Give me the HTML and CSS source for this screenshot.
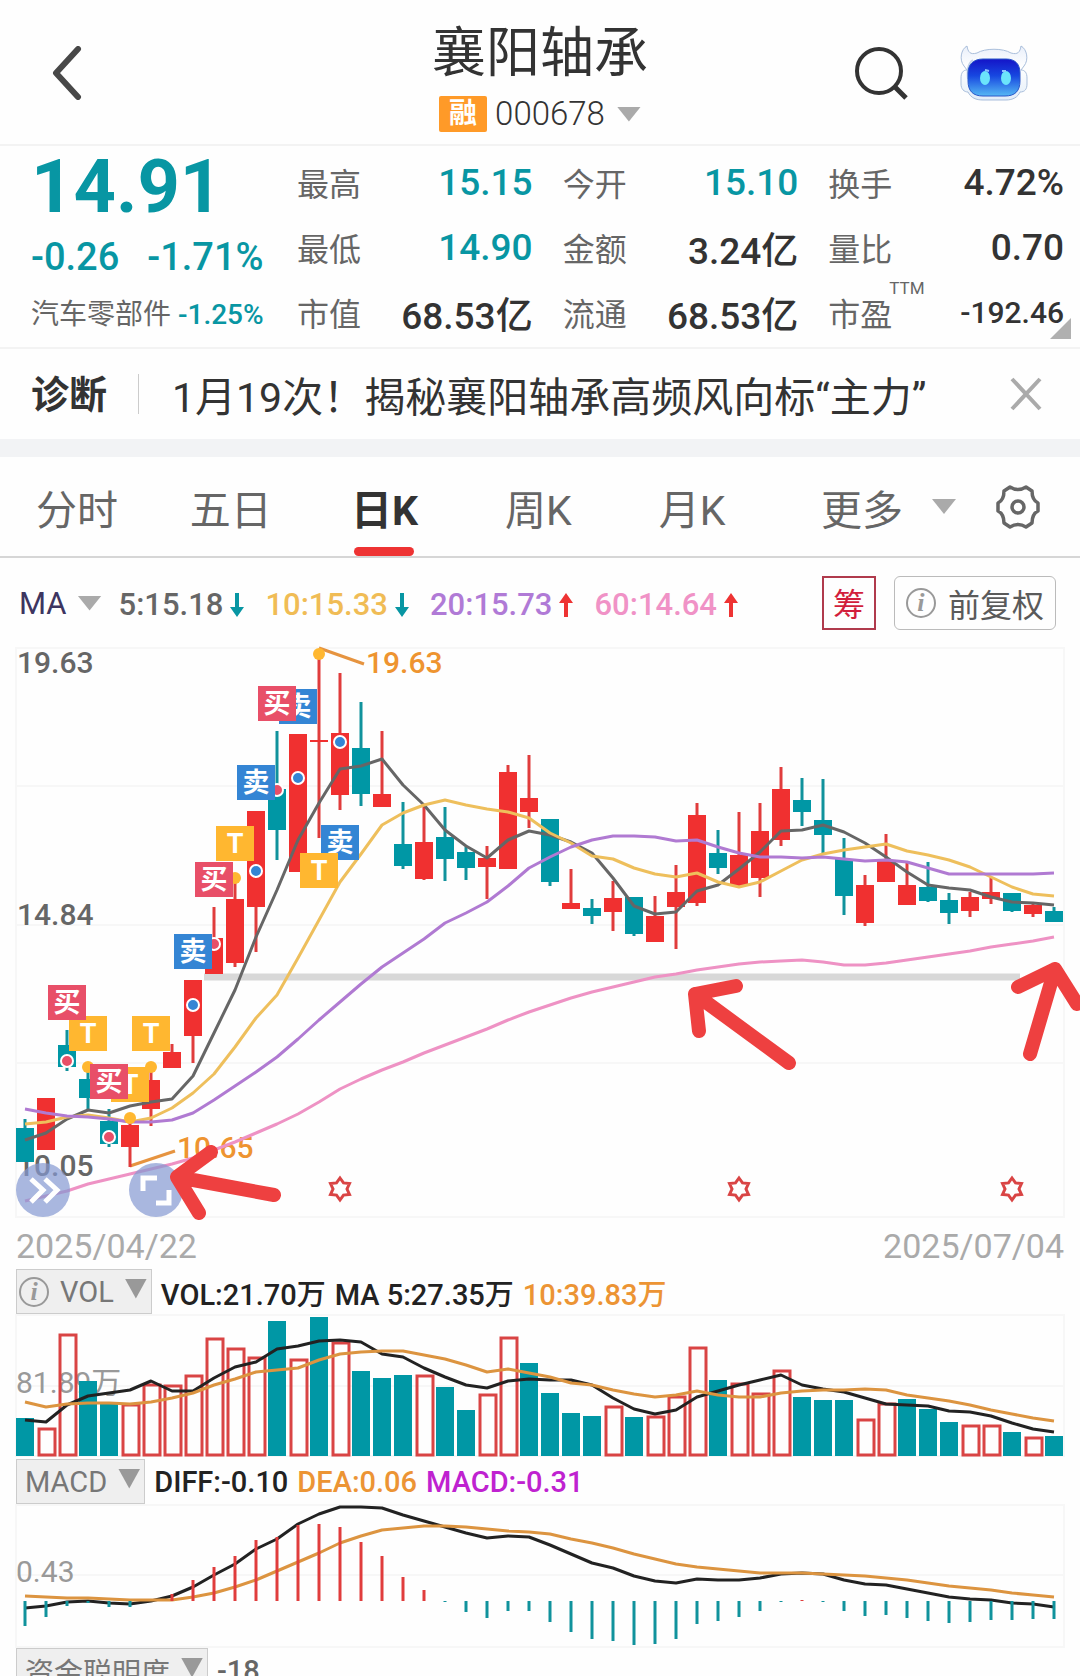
FILE: index.html
```html
<!DOCTYPE html>
<html lang="zh-CN">
<head>
<meta charset="utf-8">
<meta name="viewport" content="width=device-width, initial-scale=1">
<title>襄阳轴承 000678</title>
<link rel="stylesheet" href="styles.css">
</head>
<body>
<header class="topbar">
  <button class="icon-btn back" aria-label="返回">
    <svg width="30" height="54" viewBox="0 0 30 54"><path d="M26 3 4 27l22 24" fill="none" stroke="#484848" stroke-width="6" stroke-linecap="round" stroke-linejoin="round"/></svg>
  </button>
  <div class="title">
    <h1>襄阳轴承</h1>
    <button class="code"><span class="margin-tag">融</span>000678<i class="tri"></i></button>
  </div>
  <div class="actions">
    <button class="icon-btn" aria-label="搜索">
      <svg width="54" height="54" viewBox="0 0 54 54" fill="none" stroke="#333"><circle cx="25" cy="25" r="22" stroke-width="4"/><path d="m40 40 12 12" stroke-width="5"/></svg>
    </button>
    <button class="icon-btn" aria-label="智能助手">
      <svg width="68" height="56" viewBox="0 0 68 56">
        <defs>
          <linearGradient id="face" x1="0" y1="0" x2="0" y2="1"><stop offset="0" stop-color="#1414c8"/><stop offset=".45" stop-color="#1747e0"/><stop offset="1" stop-color="#55b8f4"/></linearGradient>
          <linearGradient id="shell" x1="0" y1="0" x2="0" y2="1"><stop offset="0" stop-color="#e9effa"/><stop offset=".4" stop-color="#fff"/><stop offset="1" stop-color="#e2edf9"/></linearGradient>
        </defs>
        <path d="M7 1C1 4-1 15 4 21l3 4c-4 0-6 3-6 8v6c0 5 3 8 7 8 3 6 8 8 15 8h23c7 0 12-3 14-8 5 0 7-3 7-8v-6c0-5-2-8-6-8l3-4c5-6 3-17-3-20-1 6-3 9-10 7-8-5-26-5-34 0-7 2-9-1-10-7Z" fill="url(#shell)" stroke="#a9bedb"/>
        <path d="M13 15c-5 3-6 11-5 19" fill="none" stroke="#c5d3ea" stroke-width="2"/>
        <path d="M23 14h23c10 0 14 6 14 14v8c0 10-5 15-15 15H23C13 51 8 46 8 36v-8c0-8 5-14 15-14Z" fill="url(#face)" stroke="#2a56c8"/>
        <ellipse cx="25" cy="33" rx="5" ry="7" fill="#6be4fb"/><ellipse cx="46" cy="33" rx="5" ry="7" fill="#6be4fb"/>
        <path d="m25 25 4 1M46 26l-4 0" stroke="#8ec5ff" stroke-width="2"/>
      </svg>
    </button>
  </div>
</header>

<section class="quote">
  <div class="price">
    <strong class="last">14.91</strong>
    <div class="change"><span>-0.26</span><span>-1.71%</span></div>
    <div class="sector">汽车零部件 <b>-1.25%</b></div>
  </div>
  <dl class="stats">
    <div><dt>最高</dt><dd class="down">15.15</dd></div>
    <div><dt>今开</dt><dd class="down">15.10</dd></div>
    <div><dt>换手</dt><dd>4.72%</dd></div>
    <div><dt>最低</dt><dd class="down">14.90</dd></div>
    <div><dt>金额</dt><dd>3.24亿</dd></div>
    <div><dt>量比</dt><dd>0.70</dd></div>
    <div><dt>市值</dt><dd>68.53亿</dd></div>
    <div><dt>流通</dt><dd>68.53亿</dd></div>
    <div><dt>市盈<sup>TTM</sup></dt><dd class="small">-192.46</dd></div>
  </dl>
</section>

<section class="diagnosis">
  <strong>诊断</strong>
  <a href="#">1月19次！揭秘襄阳轴承高频风向标“主力”</a>
  <button class="icon-btn" aria-label="关闭">
    <svg width="32" height="34" viewBox="0 0 32 34"><path d="m2 2 28 30M30 2 2 32" stroke="#aaa" stroke-width="4"/></svg>
  </button>
</section>

<nav class="tabs">
  <button>分时</button>
  <button>五日</button>
  <button class="active">日K</button>
  <button>周K</button>
  <button>月K</button>
  <button class="more">更多<i class="tri"></i></button>
  <button class="icon-btn" aria-label="设置">
    <svg width="44" height="44" viewBox="0 0 44 44" fill="none" stroke="#666" stroke-width="3.5" stroke-linejoin="round"><path d="M14 2q8 5 16 0l6 4q0 9 6 12v8q-6 3-6 12l-6 4q-8-5-16 0l-6-4q0-9-6-12v-8q6-3 6-12Z"/><circle cx="22" cy="22" r="6"/></svg>
  </button>
</nav>

<section class="ma-row">
  <button class="ma-select">MA<i class="tri"></i></button>
  <ul class="ma-list">
    <li class="ma5">5:15.18<svg class="dn" viewBox="0 0 14 24"><path d="M5 0h4v14h5l-7 10-7-10h5Z"/></svg></li>
    <li class="ma10">10:15.33<svg class="dn" viewBox="0 0 14 24"><path d="M5 0h4v14h5l-7 10-7-10h5Z"/></svg></li>
    <li class="ma20">20:15.73<svg class="up" viewBox="0 0 14 24"><path d="M5 24h4V10h5L7 0 0 10h5Z"/></svg></li>
    <li class="ma60">60:14.64<svg class="up" viewBox="0 0 14 24"><path d="M5 24h4V10h5L7 0 0 10h5Z"/></svg></li>
  </ul>
  <button class="chips">筹</button>
  <button class="adjust"><i class="info">i</i>前复权</button>
</section>

<main class="charts">
  <div class="price-chart">
    <svg id="kline" viewBox="16 648 1048 569" role="img" aria-label="日K线图"></svg>
    <button class="round first" aria-label="展开">
      <svg width="54" height="54" viewBox="0 0 54 54" fill="none" stroke="#fff" stroke-width="5"><path d="m15 16 12 11-12 12M29 16l12 11-12 12"/></svg>
    </button>
    <button class="round second" aria-label="全屏">
      <svg width="54" height="54" viewBox="0 0 54 54" fill="none" stroke="#fff" stroke-width="5"><path d="M14 28V15h14M40 27v13H27"/></svg>
    </button>
    <svg class="marks" viewBox="16 648 1048 569" aria-hidden="true">
      <path d="M211 1152 177 1177l22 36M177 1177l97 18"/>
      <path d="m736 986-41 8 4 37M695 994l94 69"/>
      <path d="m1018 987 37-18 22 35M1055 969l-25 85"/>
    </svg>
  </div>
  <div class="dates"><time>2025/04/22</time><time>2025/07/04</time></div>

  <div class="indicator">
    <button class="tag"><i class="info">i</i>VOL<i class="tri"></i></button>
    <p class="legend"><span>VOL:21.70万</span><span>MA 5:27.35万</span><span class="orange">10:39.83万</span></p>
  </div>
  <svg id="volume" class="sub" viewBox="16 0 1048 145" role="img" aria-label="成交量"></svg>

  <div class="indicator">
    <button class="tag">MACD<i class="tri"></i></button>
    <p class="legend"><span>DIFF:-0.10</span><span class="orange">DEA:0.06</span><span class="magenta">MACD:-0.31</span></p>
  </div>
  <svg id="macd" class="sub" viewBox="16 0 1048 144" role="img" aria-label="MACD"></svg>

  <div class="indicator">
    <button class="tag">资金聪明度<i class="tri"></i></button>
    <p class="legend"><span class="gray">-18</span></p>
  </div>
</main>
<script src="charts.js"></script>
</body>
</html>
```
FILE: styles.css
```css
* { box-sizing: border-box; }
body, h1, dl, dd, ul, p { margin: 0; padding: 0; }
body {
  height: 100vh;
  overflow: hidden;
  background: #fefefe;
  color: #333;
  font-family: Roboto, "Noto Sans CJK SC", sans-serif;
}
button {
  margin: 0;
  padding: 0;
  border: 0;
  background: none;
  color: inherit;
  font: inherit;
  line-height: inherit;
}
svg { display: block; }
.icon-btn { display: flex; flex: none; }
.tri {
  flex: none;
  width: 24px;
  height: 15px;
  background: #aaa;
  clip-path: polygon(0 0, 100% 0, 50% 100%);
}

/* top bar */
.topbar {
  display: grid;
  grid-template-columns: 1fr auto 1fr;
  align-items: center;
  height: 146px;
  padding: 2px 52px 0;
  border-bottom: 2px solid #f3f3f3;
}
.title { display: flex; flex-direction: column; align-items: center; align-self: start; padding-top: 24px; }
.title h1 { font-size: 54px; font-weight: 400; line-height: 56px; }
.code { display: flex; align-items: center; gap: 8px; font-size: 33px; font-weight: 300; line-height: 44px; margin-top: 10px; }
.code .tri { margin-left: 4px; }
.margin-tag {
  width: 48px;
  border-radius: 2px;
  background: #ff9a28;
  color: #fff;
  font-size: 28px;
  font-weight: 700;
  line-height: 36px;
  text-align: center;
}
.actions { display: flex; justify-content: flex-end; align-items: center; gap: 52px; }

/* quote */
.quote {
  position: relative;
  display: grid;
  grid-template-columns: 266px 1fr;
  height: 203px;
  padding: 4px 16px 0 31px;
  border-bottom: 2px solid #f3f3f3;
}
.quote::after {
  content: "";
  position: absolute;
  right: 9px;
  bottom: 8px;
  width: 21px;
  height: 21px;
  background: #b0b0b0;
  clip-path: polygon(100% 0, 100% 100%, 0 100%);
}
.price { color: #0896a3; }
.last { display: block; font-size: 74px; line-height: 74px; font-weight: 700; }
.change { display: flex; gap: 28px; font-size: 38px; line-height: 66px; font-weight: 500; }
.sector { color: #666; font-size: 28px; line-height: 50px; white-space: nowrap; }
.sector b { color: #0896a3; font-weight: 500; }
.stats { display: grid; grid-template-columns: repeat(3, 1fr); grid-auto-rows: 65px; column-gap: 30px; }
.stats div { display: flex; justify-content: space-between; align-items: center; white-space: nowrap; }
.stats dt { position: relative; padding-bottom: 2px; color: #666; font-size: 32px; }
.stats dd { font-size: 37px; font-weight: 500; }
.stats dd.down { color: #0896a3; }
.stats dd.small { font-size: 30px; }
.stats sup { position: absolute; left: 61px; top: -11px; font-size: 17px; line-height: 20px; }

/* diagnosis strip */
.diagnosis {
  display: flex;
  align-items: center;
  height: 108px;
  padding: 0 38px 0 31px;
  border-bottom: 18px solid #f2f3f5;
}
.diagnosis strong { font-size: 38px; line-height: 38px; padding: 2px 31px 0 0; border-right: 1px solid #ccc; }
.diagnosis a { flex: 1; padding-left: 33px; color: #333; font-size: 41px; text-decoration: none; white-space: nowrap; }

/* period tabs */
.tabs {
  display: flex;
  align-items: center;
  height: 101px;
  padding-right: 40px;
  border-bottom: 2px solid #d6d6d6;
  color: #666;
  font-size: 41px;
}
.tabs button { flex: 1; align-self: stretch; }
.tabs .active { position: relative; color: #333; font-weight: 700; }
.tabs .active::after {
  content: "";
  position: absolute;
  left: 50%;
  bottom: 0;
  width: 60px;
  height: 9px;
  margin-left: -30px;
  border-radius: 5px;
  background: #ee3333;
}
.tabs .more { display: flex; flex: none; align-items: center; gap: 29px; padding: 0 40px 0 52px; }
.tabs .icon-btn { flex: none; align-items: center; }

/* moving averages */
.ma-row { display: flex; align-items: center; height: 90px; padding: 0 24px 0 19px; font-size: 31px; }
.ma-select { display: flex; align-items: center; gap: 11px; color: #3d3560; }
.ma-list { display: flex; flex: 1; gap: 21px; margin-left: 17px; padding-top: 3px; font-weight: 500; list-style: none; }
.ma-list li { display: flex; align-items: center; gap: 7px; }
.ma-list svg { width: 14px; height: 24px; }
.dn { fill: #0896a3; }
.up { fill: #e33; }
.ma5 { color: #666; }
.ma10 { color: #f0bc55; }
.ma20 { color: #b07ad6; }
.ma60 { color: #f092c6; }
.chips { width: 54px; height: 54px; border: 2px solid #b03a4c; color: #d21e3c; font-size: 32px; line-height: 54px; }
.adjust {
  display: flex;
  align-items: center;
  gap: 12px;
  height: 54px;
  margin-left: 18px;
  padding: 0 11px;
  border: 1px solid #bbb;
  border-radius: 6px;
  color: #5a5a5a;
  font-size: 32px;
}
.info {
  flex: none;
  width: 30px;
  height: 30px;
  border: 2px solid #999;
  border-radius: 50%;
  color: #999;
  font-family: "Liberation Serif", serif;
  font-size: 26px;
  font-weight: 700;
  line-height: 25px;
  text-align: center;
}

/* charts */
.charts { padding: 0 16px; }
.charts > *, .price-chart > svg { width: 100%; }
.price-chart { position: relative; }
.price-chart svg, .sub { overflow: visible; }
.marks { position: absolute; left: 0; top: 0; fill: none; stroke: #ee4040; stroke-width: 14; stroke-linecap: round; stroke-linejoin: round; pointer-events: none; }
.round { position: absolute; bottom: 0; width: 54px; height: 54px; border-radius: 50%; background: rgba(133, 152, 210, .7); }
.first { left: 0; }
.second { left: 113px; }
.dates { display: flex; justify-content: space-between; height: 52px; color: #aaa; font-size: 34px; line-height: 58px; }
.indicator { display: flex; align-items: center; height: 45px; }
.tag {
  display: flex;
  align-items: center;
  gap: 11px;
  height: 45px;
  padding: 0 4px 0 8px;
  border: 1px solid #ccc;
  background: #efefef;
  color: #777;
  font-size: 29px;
}
.tag:has(.info) { padding-left: 2px; }
.tag .tri { width: 22px; height: 20px; margin-bottom: 6px; background: #999; }
.legend { display: flex; gap: 9px; margin-left: 9px; color: #222; font-size: 29px; font-weight: 500; white-space: nowrap; }
.orange { color: #ec9434; }
.magenta { color: #bf22d0; }
.gray { color: #666; }

/* chart drawing */
.frame { fill: none; stroke: #f7f7f7; stroke-width: 2; }
.grid { stroke: #f7f7f7; stroke-width: 2; }
.level { stroke: #d8d8d8; stroke-width: 7; }
.r { fill: #f03030; stroke: #e03c3c; }
.g { fill: #0097a5; stroke: #10929c; }
.body { stroke: none; }
.wick, .stick { stroke-width: 3; }
.hollow { fill: none; stroke: #d94444; stroke-width: 3; }
.line { fill: none; stroke-width: 3; stroke-linejoin: round; }
.l5 { stroke: #666; }
.l10 { stroke: #eebf5c; }
.l20 { stroke: #b07ad2; }
.l60 { stroke: #ee92c4; }
.lblack { stroke: #222; }
.lorange { stroke: #dc9440; }
.axis { fill: #666; font-size: 30px; font-weight: 500; }
.axis.pale { fill: #999; font-weight: 400; }
.peak { fill: #ee9430; font-size: 30px; font-weight: 500; }
.lead { stroke: #e69440; stroke-width: 3; }
.buy { fill: #e84f68; }
.sell { fill: #3485d4; }
.t { fill: #ffb730; }
.ring { stroke: #fff; stroke-width: 2; }
.mark-text { fill: #fff; font-size: 27px; font-weight: 700; text-anchor: middle; }
.star { fill: none; stroke: #d94444; stroke-width: 3; }
```
FILE: charts.js
```js
const X = i => 25 + 21 * i;
const el = (tag, cls, attrs, text = '') =>
  `<${tag} class="${cls}" ${Object.entries(attrs).map(([k, v]) => `${k}="${v}"`).join(' ')}>${text}</${tag}>`;
const hline = (cls, y, x1 = 16, x2 = 1064) => el('line', cls, { x1, x2, y1: y, y2: y });
const line = (cls, ys) => el('polyline', 'line ' + cls, { points: ys.map((y, i) => X(i) + ',' + y).join(' ') });

// colour, body top, body bottom, high, low
const candles = [
  ['g',1128,1162,1119,1162],['r',1098,1150,1098,1150],['g',1045,1067,1030,1071],['g',1079,1098,1072,1110],['g',1121,1144,1109,1147],
  ['r',1125,1147,1122,1167],['r',1080,1109,1072,1126],['r',1052,1068,1044,1068],['r',980,1036,980,1063],['r',938,974,907,974],
  ['r',899,963,880,967],['r',811,907,811,952],['g',789,830,731,860],['r',734,872,734,872],['r',740,742,655,838],
  ['r',733,795,673,810],['g',748,794,702,806],['r',794,807,731,807],['g',844,866,802,869],['r',842,879,804,880],
  ['g',837,859,807,881],['g',852,868,847,880],['r',858,867,846,899],['r',772,869,765,869],['r',798,812,755,828],
  ['g',819,882,819,886],['r',903,909,869,909],['g',908,916,899,924],['r',898,912,881,931],['g',897,934,897,936],
  ['r',916,942,896,942],['r',892,907,865,949],['r',815,903,803,906],['g',853,868,830,874],['r',855,886,812,886],
  ['r',831,878,803,897],['r',789,840,767,846],['g',800,812,778,826],['g',820,835,779,855],['g',859,896,838,915],
  ['r',885,923,875,926],['r',860,882,834,882],['r',885,905,862,905],['g',887,901,862,902],['g',900,913,893,924],
  ['r',897,911,892,917],['r',892,899,877,904],['g',893,911,893,912],['r',905,914,903,917],['g',911,922,907,922]
];
const ma5 = [1140,1133,1119,1110,1113,1106,1102,1099,1076,1033,990,937,890,840,803,769,766,759,785,805,830,846,858,840,831,835,842,853,878,906,914,912,891,885,869,852,831,830,825,832,843,857,872,885,888,890,897,902,903,905];
const ma10 = [1124,1122,1117,1115,1118,1122,1118,1108,1093,1074,1047,1018,995,958,920,882,854,825,813,805,800,805,809,812,818,833,843,856,859,868,874,877,873,882,887,882,871,860,854,850,847,844,851,855,860,867,877,887,894,896];
const ma20 = [1109,1113,1116,1117,1119,1122,1122,1120,1113,1100,1086,1072,1057,1039,1020,1002,984,967,953,939,923,913,902,886,868,857,847,840,836,836,837,841,840,847,853,857,857,858,857,859,861,860,862,868,874,874,874,874,874,873];
const ma60 = [1201,1196,1191,1184,1179,1174,1169,1164,1158,1150,1142,1133,1124,1114,1102,1089,1079,1070,1062,1053,1045,1037,1029,1020,1012,1005,998,992,987,982,977,974,970,967,964,962,961,960,962,965,965,963,960,957,954,951,947,944,941,937];

const badge = (cls, x, y, text) =>
  el('rect', cls, { x, y, width: 38, height: 35 }) + el('text', 'mark-text', { x: x + 19, y: y + 27 }, text);
const dot = (cls, x, y) => el('circle', cls === 't' ? 't' : cls + ' ring', { cx: x, cy: y, r: 6 });
const star = x => {
  const pts = [];
  for (let k = 0; k < 12; k++) {
    const r = k % 2 ? 7 : 11, a = Math.PI * k / 6;
    pts.push((x + r * Math.sin(a)).toFixed(1) + ',' + (1189 - r * Math.cos(a)).toFixed(1));
  }
  return el('polygon', 'star', { points: pts.join(' ') });
};

document.getElementById('kline').innerHTML =
  el('rect', 'frame', { x: 16, y: 648, width: 1048, height: 569 }) +
  [786, 925, 1063].map(y => hline('grid', y)).join('') +
  hline('level', 977, 204, 1020) +
  [['19.63', 673], ['14.84', 925], ['10.05', 1176]].map(([t, y]) => el('text', 'axis', { x: 17, y }, t)).join('') +
  el('line', 'lead', { x1: 319, y1: 648, x2: 364, y2: 664 }) + el('text', 'peak', { x: 366, y: 673 }, '19.63') +
  el('line', 'lead', { x1: 130, y1: 1166, x2: 175, y2: 1151 }) + el('text', 'peak', { x: 177, y: 1158 }, '10.65') +
  candles.map(([c, t, b, h, l], i) =>
    el('line', c + ' wick', { x1: X(i), x2: X(i), y1: h, y2: l }) +
    el('rect', c + ' body', { x: X(i) - 9, y: t, width: 18, height: b - t })).join('') +
  line('l5', ma5) + line('l10', ma10) + line('l20', ma20) + line('l60', ma60) +
  [['buy',67,1061],['t',88,1067],['t',151,1067],['t',130,1118],['buy',109,1137],['sell',193,1005],['buy',214,944],
   ['t',235,878],['sell',256,871],['buy',277,790],['sell',298,778],['t',319,654],['sell',340,742]].map(d => dot(...d)).join('') +
  [['sell',279,689,'卖'],['buy',258,686,'买'],['sell',237,765,'卖'],['t',216,826,'T'],['buy',195,862,'买'],['sell',174,934,'卖'],
   ['sell',321,825,'卖'],['t',300,853,'T'],['t',69,1016,'T'],['buy',48,985,'买'],['t',132,1016,'T'],['t',111,1067,'T'],['buy',90,1064,'买']]
    .map(b => badge(...b)).join('') +
  [340, 739, 1012].map(star).join('');

const volume = [
  'g104','r114','r20','g67','g88','r90','r70','r71','r61','r24','r34','r43','g7','r45','g3','r28','g57','g64','g61','r61','g73','g96','r80','r23','g49',
  'g79','g99','g102','r92','g103','r102','r82','r33','g66','r69','r79','r56','g83','g86','g86','r105','r89','g85','g95','g108','r111','r111','g118','r123','g122'];
const vol5 = [106,108,91,82,79,76,67,77,77,64,53,48,35,32,27,26,28,40,43,54,63,71,74,67,65,66,66,71,84,95,100,96,83,77,71,66,61,71,75,78,84,90,91,92,97,98,102,109,115,118];
const vol10 = [88,93,90,89,89,90,88,84,79,71,65,58,56,54,46,40,38,37,37,41,45,51,58,55,59,63,69,71,76,80,83,81,77,81,83,83,79,77,76,76,75,76,81,84,87,91,96,100,104,107];

document.getElementById('volume').innerHTML =
  el('rect', 'frame', { x: 16, y: 1, width: 1048, height: 141 }) + hline('grid', 72) +
  el('text', 'axis pale', { x: 16, y: 79 }, '81.89万') +
  volume.map((v, i) => {
    const top = +v.slice(1);
    return v[0] === 'g'
      ? el('rect', 'g body', { x: X(i) - 9, y: top, width: 18, height: 142 - top })
      : el('rect', 'hollow', { x: X(i) - 7, y: top + 1, width: 16, height: 140 - top });
  }).join('') + line('lblack', vol5) + line('lorange', vol10);

const bars = [122,113,102,99,103,103,97,90,76,63,52,36,33,21,20,23,38,52,73,86,98,108,114,107,107,118,128,135,137,141,140,135,120,117,113,107,98,96,98,107,112,111,114,117,119,118,116,116,115,115];
const diff = [104,102,98,97,99,100,97,92,83,71,60,45,35,20,10,3,3,4,11,17,23,29,34,32,33,41,50,59,64,72,77,79,75,76,76,74,70,69,70,76,80,81,85,89,93,95,96,99,100,103];
const dea = [92,93,94,94,95,96,96,96,93,89,83,76,67,58,49,39,32,26,24,22,22,23,25,27,28,30,35,39,44,50,55,60,63,65,67,69,69,69,70,71,72,74,76,79,82,84,86,89,91,93];

document.getElementById('macd').innerHTML =
  el('rect', 'frame', { x: 16, y: 1, width: 1048, height: 142 }) + hline('grid', 71) +
  el('text', 'axis pale', { x: 16, y: 78 }, '0.43') +
  line('lblack', diff) + line('lorange', dea) +
  bars.map((y, i) => el('line', (y < 97 ? 'r' : 'g') + ' stick', { x1: X(i), x2: X(i), y1: 97, y2: y })).join('');
```
